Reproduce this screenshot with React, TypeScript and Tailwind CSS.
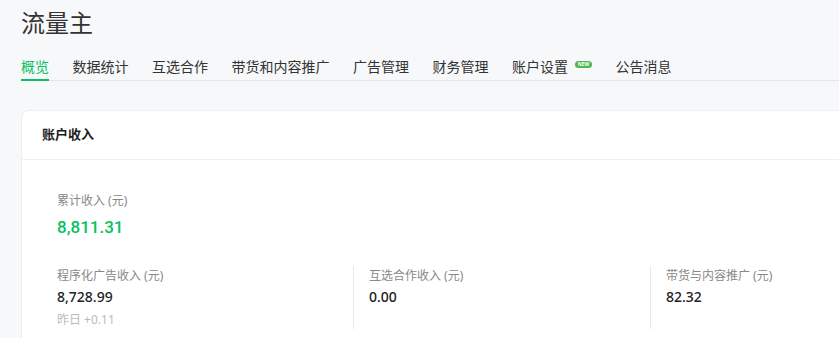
import React from 'react';

const font = { fontFamily: '"Noto Sans", "Noto Sans CJK SC", sans-serif' };

const Overview = () => {
  const tabs = ['概览', '数据统计', '互选合作', '带货和内容推广', '广告管理', '财务管理', '账户设置', '公告消息'];

  const incomes = [
    { label: '程序化广告收入 (元)', value: '8,728.99', yesterday: '昨日 +0.11' },
    { label: '互选合作收入 (元)', value: '0.00' },
    { label: '带货与内容推广 (元)', value: '82.32' }
  ];

  return (
    <div className="h-[338px] w-full overflow-hidden bg-[#f7f8fa] pl-[21px] pt-[7px]" style={font}>
      <h1 className="text-[24px] leading-[32px] text-[#333]">流量主</h1>

      <div className="mt-[17px] flex w-[1000px] border-b border-[#e3e5e9]">
        {tabs.map((tab, index) => (
          <div key={index} className="mr-[23.5px] flex items-start">
            <div
              className={`-mb-px border-b-2 pb-[1px] text-[14px] leading-[22px] ${
                index === 0 ? 'border-[#07c160] text-[#07c160]' : 'border-transparent text-[#333]'
              }`}
            >
              {tab}
            </div>
            {tab === '账户设置' && (
              <span className="ml-[7px] mt-[5px] flex h-[7px] w-[17px] items-center justify-center rounded-full bg-[#4cb84f] text-[5px] font-bold leading-none text-white">
                NEW
              </span>
            )}
          </div>
        ))}
      </div>

      <div className="mt-[29px] w-[963px] rounded-lg border border-[#eceef1] bg-white">
        <div className="flex h-[49px] items-center border-b border-[#eef0f2] pl-[20px] text-[13px] font-semibold text-[#1d1d1d]">
          账户收入
        </div>

        <div className="pl-[35px] pt-[31px]">
          <div className="text-[12px] leading-[20px] text-[#888]">累计收入 (元)</div>
          <div className="mt-[2px] font-['Roboto',sans-serif] text-[17px] font-medium leading-[28px] text-[#07c160]">8,811.31</div>

          <div className="mt-[25px] flex pb-[20px]">
            {incomes.map((item, index) => (
              <div
                key={index}
                className={index === 0 ? 'w-[296px]' : 'w-[297px] border-l border-[#e8e8e8] pl-[15px]'}
              >
                <div className="text-[12px] leading-[20px] text-[#888]">{item.label}</div>
                <div className="text-[14px] font-medium leading-[22px] text-[#222]">{item.value}</div>
                {item.yesterday && (
                  <div className="mt-[3px] text-[12px] leading-[18px] text-[#bbb]">{item.yesterday}</div>
                )}
              </div>
            ))}
          </div>
        </div>
      </div>
    </div>
  );
};

export default function App() {
  return <Overview />;
}
